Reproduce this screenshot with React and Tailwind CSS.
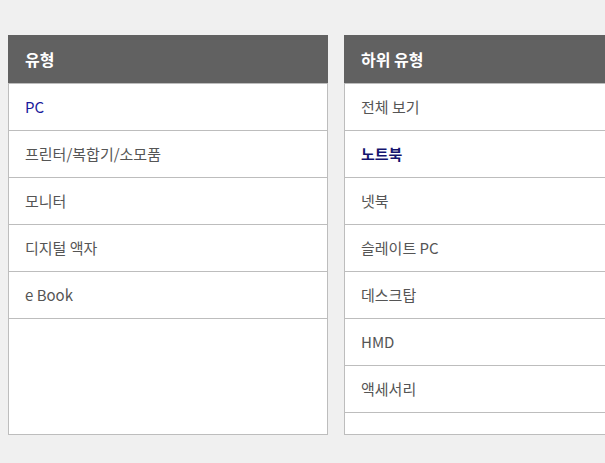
import React from 'react';

const font = { fontFamily: '"Noto Sans CJK KR", "Noto Sans", sans-serif' };

const types = [
  { label: 'PC', active: true },
  { label: '프린터/복합기/소모품' },
  { label: '모니터' },
  { label: '디지털 액자' },
  { label: 'e Book' },
];

const subTypes = [
  { label: '전체 보기' },
  { label: '노트북', active: true },
  { label: '넷북' },
  { label: '슬레이트 PC' },
  { label: '데스크탑' },
  { label: 'HMD' },
  { label: '액세서리' },
];

const Panel = ({ title, items, boldActive }) => (
  <div className="w-[320px] h-[400px] shrink-0 flex flex-col bg-white border-x border-b border-[#bdbdbd]">
    <div className="-mx-px h-[48px] shrink-0 flex items-center px-4 bg-[#616161] text-white text-[16px] font-semibold">
      <span className="pl-px">{title}</span>
    </div>
    <ul className="flex flex-col">
      {items.map((item) => (
        <li
          key={item.label}
          className={
            'h-[47px] flex items-center px-4 border-t border-[#bdbdbd] text-[15px] ' +
            (item.active
              ? boldActive
                ? 'text-[#14146e] font-bold'
                : 'text-[#1a1a9c]'
              : 'text-[#555555]')
          }
        >
          {item.label}
        </li>
      ))}
      <li className="border-t border-[#bdbdbd]" />
    </ul>
  </div>
);

export default function App() {
  return (
    <div className="w-[605px] h-[463px] overflow-hidden bg-[#f0f0f0]" style={font}>
      <div className="flex gap-4 pl-2 pt-[35px]">
        <Panel title="유형" items={types} />
        <Panel title="하위 유형" items={subTypes} boldActive />
      </div>
    </div>
  );
}
